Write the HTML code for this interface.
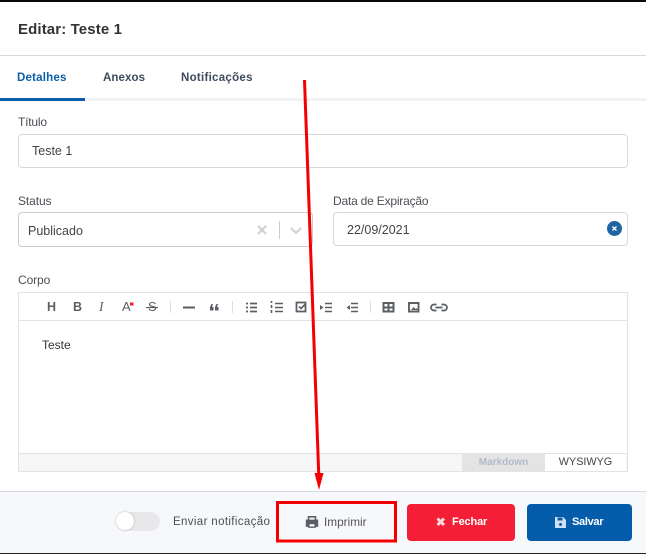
<!DOCTYPE html>
<html><head><meta charset="utf-8">
<style>
html,body{margin:0;padding:0;background:#fff}
body{width:646px;height:554px;position:relative;overflow:hidden;font-family:"Liberation Sans",sans-serif;color:#3a3f45}
.a{position:absolute;white-space:nowrap}
.box{position:absolute;box-sizing:border-box;border:1px solid #d8d8d8;border-radius:4px;background:#fff}
.lbl{font-size:12px;color:#4a4f55;line-height:14px}
.val{font-size:12.5px;color:#444;line-height:14px}
.tab{font-size:11.5px;font-weight:bold;line-height:14px;color:#3d4a5c}
.tb{font-size:12.5px;color:#5b5f64;line-height:14px}
svg{position:absolute;left:0;top:0}
</style></head><body>
<div class="a" style="left:0;top:0;width:646px;height:2px;background:#0a0a0a"></div>
<div class="a" style="left:18px;top:21px;font-size:15px;font-weight:bold;color:#333;line-height:18px;letter-spacing:.12px">Editar: Teste 1</div>
<div class="a" style="left:0;top:55px;width:646px;height:1px;background:#d9d9d9"></div>

<div class="a tab" style="left:17px;top:71px;color:#0a5eaa;letter-spacing:.2px">Detalhes</div>
<div class="a tab" style="left:103px;top:71px;letter-spacing:.1px">Anexos</div>
<div class="a tab" style="left:181px;top:71px;letter-spacing:.28px">Notificações</div>
<div class="a" style="left:0;top:98px;width:646px;height:3px;background:#f1f2f5"></div>
<div class="a" style="left:0;top:98px;width:85px;height:3px;background:#0a5eaa"></div>

<div class="a lbl" style="left:18px;top:115px;letter-spacing:-.2px">Título</div>
<div class="box" style="left:18px;top:134px;width:610px;height:34px"></div>
<div class="a val" style="left:32px;top:144px">Teste 1</div>

<div class="a lbl" style="left:18px;top:194px;letter-spacing:-.1px">Status</div>
<div class="box" style="left:18px;top:212px;width:295px;height:35px;border-color:#ccc"></div>
<div class="a val" style="left:28px;top:224px">Publicado</div>
<div class="a" style="left:279px;top:221px;width:1px;height:18px;background:#ccc"></div>

<div class="a lbl" style="left:333px;top:194px;letter-spacing:-.2px">Data de Expiração</div>
<div class="box" style="left:333px;top:212px;width:295px;height:34px"></div>
<div class="a val" style="left:347px;top:223px">22/09/2021</div>
<div class="a" style="left:607px;top:221px;width:15px;height:15px;border-radius:50%;background:#1f65a3"></div>

<div class="a lbl" style="left:18px;top:273px;letter-spacing:-.1px">Corpo</div>
<div class="a" style="left:18px;top:292px;width:610px;height:180px;box-sizing:border-box;border:1px solid #e3e3e3;background:#fff"></div>
<div class="a" style="left:19px;top:320px;width:608px;height:1px;background:#e3e3e3"></div>
<div class="a" style="left:42px;top:338px;font-size:12px;color:#333;line-height:14px">Teste</div>
<div class="a" style="left:19px;top:453px;width:608px;height:18px;box-sizing:border-box;border-top:1px solid #e3e3e3;background:#f6f6f6"></div>
<div class="a" style="left:462px;top:454px;width:83px;height:17px;background:#e4e4e4;color:#b3bac9;font-size:10px;font-weight:bold;text-align:center;line-height:17px">Markdown</div>
<div class="a" style="left:545px;top:454px;width:81px;height:17px;background:#fff;color:#444;font-size:10.8px;text-align:center;line-height:17px">WYSIWYG</div>

<div class="a" style="left:0;top:491px;width:646px;height:62px;box-sizing:border-box;border-top:1px solid #d8d9de;background:#f7f8fb"></div>
<div class="a" style="left:0;top:553px;width:646px;height:1px;background:#222"></div>

<div class="a" style="left:116px;top:512px;width:44px;height:19px;border-radius:10px;background:#e8e8ea"></div>
<div class="a" style="left:116px;top:512px;width:18px;height:18px;border-radius:50%;background:#fff;box-shadow:0 0 2px rgba(0,0,0,.25)"></div>
<div class="a" style="left:173px;top:515px;font-size:11.5px;color:#4a4f55;line-height:14px;letter-spacing:.36px">Enviar notificação</div>

<div class="a" style="left:324px;top:515px;font-size:11.8px;color:#555;line-height:14px">Imprimir</div>

<div class="a" style="left:407px;top:504px;width:108px;height:37px;border-radius:4px;background:#f51e37"></div>
<div class="a" style="left:452px;top:515px;font-size:11px;font-weight:bold;color:#fff;line-height:14px;letter-spacing:-.15px">Fechar</div>
<div class="a" style="left:527px;top:504px;width:105px;height:37px;border-radius:4px;background:#045cab"></div>
<div class="a" style="left:572px;top:515px;font-size:11px;font-weight:bold;color:#fff;line-height:14px;letter-spacing:-.3px">Salvar</div>

<div class="a tb" style="left:47px;top:300px;font-weight:bold">H</div>
<div class="a tb" style="left:73px;top:300px;font-weight:bold">B</div>
<div class="a tb" style="left:99px;top:300px;font-style:italic;font-family:'Liberation Serif',serif;font-size:13.5px">I</div>
<div class="a tb" style="left:122px;top:300px;font-size:13px">A</div>
<div class="a tb" style="left:148px;top:300px;font-size:13px">S</div>

<svg width="646" height="554" viewBox="0 0 646 554" fill="none">
  <!-- select icons -->
  <path d="M258 226l8 8M266 226l-8 8" stroke="#cfcfcf" stroke-width="2"/>
  <path d="M291 228l5 5 5-5" stroke="#d0d0d0" stroke-width="2"/>
  <path d="M612.500 226.500l4 4M616.500 226.500l-4 4" stroke="#fff" stroke-width="1.400"/>
  <!-- toolbar -->
  <g stroke="#5b5f64" stroke-width="1.500">
    <path d="M130 304h3.500" stroke="#f51e37" stroke-width="3"/>
    <path d="M146 307.500h12" stroke-width="1.200"/>
    <path d="M170.500 301v12M232.500 301v12M370.500 301v12" stroke="#dedede" stroke-width="1"/>
    <path d="M183 307.500h12" stroke-width="2"/>
    <path d="M246 303.500h2M250 303.500h7M246 307.500h2M250 307.500h7M246 311.500h2M250 311.500h7" stroke-width="1.700"/>
    <path d="M271.500 301v2M271.500 305v3M271.500 310v3M275 303.500h8M275 307.500h8M275 311.500h8" stroke-width="1.600"/>
    <path d="M296.500 302.500h9v9h-9z" stroke-width="1.800"/>
    <path d="M299 306.500l2 2 5-5" stroke-width="1.600"/>
    <path d="M325 303.500h7M325 307.500h7M325 311.500h7M351 303.500h7M351 307.500h7M351 311.500h7" stroke-width="1.600"/>
    <path d="M383.500 303h10v8.500h-10zM388.500 303v8.500M383.500 307.500h10" stroke-width="2"/>
    <path d="M409 303h9.500v8.500H409z" stroke-width="1.900"/>
    <path d="M436.500 304.500h-2.500a3 3 0 0 0 0 6h2.500M441.500 304.500h2.500a3 3 0 0 1 0 6h-2.500M435.500 307.500h7" stroke-width="1.700"/>
  </g>
  <g fill="#5b5f64">
    <path d="M210 304h3.500v3.500l-1.500 3h-1.500l1-3H210zM215 304h3.500v3.500l-1.500 3h-1.500l1-3H215z" transform="rotate(180 214.250 307.250)"/>
    <path d="M320 305l3.500 2.500-3.500 2.500zM350 305l-3.500 2.500 3.500 2.500z"/>
    <path d="M411 310l2.500-3 2 2 1-1 1.500 2z"/>
  </g>
  <!-- footer icons -->
  <g transform="translate(306,516)">
    <path d="M2.500 4V.8h7V4" stroke="#5b5f64" stroke-width="1.600"/>
    <path d="M.7 4.500h10.600v5.500H.7z" stroke="#5b5f64" stroke-width="1.800" fill="#5b5f64"/>
    <path d="M2.800 7.500h6.400v3.700H2.800z" stroke="#5b5f64" stroke-width="1.400" fill="#f7f8fb"/>
  </g>
  <path d="M437.500 518.500l6.500 6.500M444 518.500l-6.500 6.500" stroke="#ffd9dd" stroke-width="3"/>
  <path d="M555 517h8l3 3v8h-11z" fill="#cfe0f2"/>
  <path d="M557.500 517.500h5v3h-5z" fill="#045cab"/>
  <circle cx="560.500" cy="524.500" r="1.500" fill="#045cab"/>
  <!-- red annotation -->
  <path d="M304.500 80L318.800 476" stroke="#f40000" stroke-width="3"/>
  <path d="M314.500 473h9l-4.500 17z" fill="#f40000"/>
  <rect x="277.500" y="502.500" width="118" height="38.500" stroke="#f40000" stroke-width="3"/>
</svg>
</body></html>
